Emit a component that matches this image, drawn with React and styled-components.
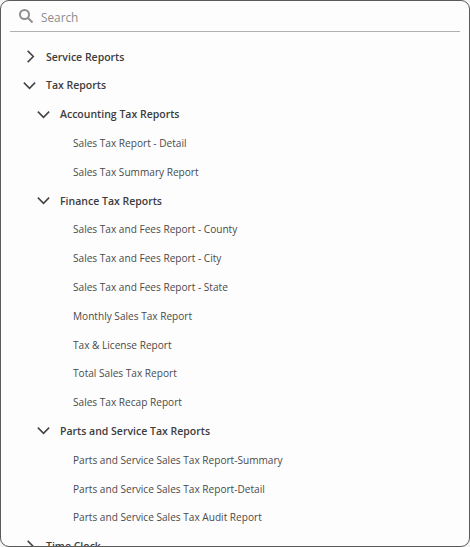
import styled, { createGlobalStyle } from 'styled-components';

const GlobalStyle = createGlobalStyle`
  html, body {
    margin: 0;
    padding: 0;
    height: 100%;
    overflow: hidden;
    background: #f4f4f4;
  }
  #root {
    height: 100%;
  }
`;

const tree = [
  { name: 'Service Reports', closed: true },
  {
    name: 'Tax Reports',
    groups: [
      {
        name: 'Accounting Tax Reports',
        items: ['Sales Tax Report - Detail', 'Sales Tax Summary Report'],
      },
      {
        name: 'Finance Tax Reports',
        items: [
          'Sales Tax and Fees Report - County',
          'Sales Tax and Fees Report - City',
          'Sales Tax and Fees Report - State',
          'Monthly Sales Tax Report',
          'Tax & License Report',
          'Total Sales Tax Report',
          'Sales Tax Recap Report',
        ],
      },
      {
        name: 'Parts and Service Tax Reports',
        items: [
          'Parts and Service Sales Tax Report-Summary',
          'Parts and Service Sales Tax Report-Detail',
          'Parts and Service Sales Tax Audit Report',
        ],
      },
    ],
  },
  { name: 'Time Clock', closed: true },
];

function Chevron({ closed }) {
  return (
    <ChevronIcon viewBox="0 0 16 16" fill="none" stroke="#444" strokeWidth="1.7">
      {closed ? <path d="M5 2 L11 8 L5 14" /> : <path d="M2 5 L8 11 L14 5" />}
    </ChevronIcon>
  );
}

export default function App() {
  return (
    <>
      <GlobalStyle />
      <Panel>
        <SearchBar>
          <svg width="16" height="16" viewBox="0 0 16 16" fill="none" stroke="#8f8f8f" strokeWidth="2">
            <circle cx="6.5" cy="6.5" r="4.5" />
            <path d="M10 10 L14.5 14.5" />
          </svg>
          <SearchText>Search</SearchText>
        </SearchBar>
        <Tree>
          {tree.map(section => (
            <div key={section.name}>
              <Row>
                <Toggle $closed={section.closed}>
                  <Chevron closed={section.closed} />
                </Toggle>
                <Label>{section.name}</Label>
              </Row>
              {section.groups && section.groups.map(group => (
                <div key={group.name}>
                  <GroupRow>
                    <Toggle>
                      <Chevron />
                    </Toggle>
                    <Label>{group.name}</Label>
                  </GroupRow>
                  {group.items.map(item => (
                    <Item key={item}>{item}</Item>
                  ))}
                </div>
              ))}
            </div>
          ))}
        </Tree>
      </Panel>
    </>
  );
}

const Panel = styled.div`
  box-sizing: border-box;
  width: 470px;
  height: 547px;
  border: 1.5px solid #5a5a5a;
  border-radius: 9px;
  background: #fdfdfd;
  overflow: hidden;
  font-family: "Open Sans", "Noto Sans", sans-serif;
`;

const SearchBar = styled.div`
  display: flex;
  align-items: center;
  gap: 7px;
  height: 30px;
  margin: 0 9px;
  padding: 0 0 0 8px;
  border-bottom: 1px solid #b0b0b0;
`;

const SearchText = styled.span`
  padding-top: 1px;
  font-size: 11.8px;
  color: #8c8c8c;
`;

const Tree = styled.div`
  padding-top: 10.2px;
`;

const Row = styled.div`
  display: flex;
  align-items: center;
  height: 28.8px;
  padding-left: 20px;
`;

const GroupRow = styled(Row)`
  padding-left: 34px;
`;

const Toggle = styled.span`
  display: flex;
  justify-content: center;
  width: 16px;
  margin-right: ${props => (props.$closed ? '8px' : '9px')};
  margin-left: ${props => (props.$closed ? '1px' : '0')};
`;

const ChevronIcon = styled.svg`
  width: 15px;
  height: 15px;
`;

const Label = styled.span`
  font-size: 10.5px;
  font-weight: 600;
  color: #3c3c3c;
`;

const Item = styled.div`
  display: flex;
  align-items: center;
  height: 28.8px;
  padding-left: 72px;
  font-size: 10.1px;
  color: #4a4a4a;
`;
